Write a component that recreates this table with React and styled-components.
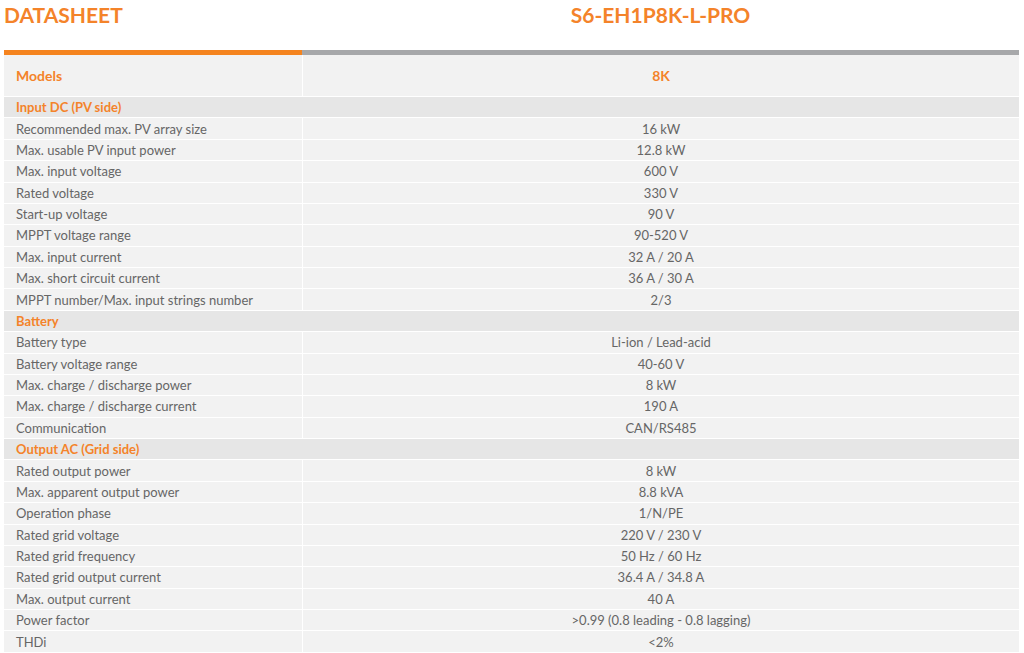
import styled, { createGlobalStyle } from "styled-components";

const GlobalStyle = createGlobalStyle`
  body {
    margin: 0;
    background: #ffffff;
    font-family: Lato, "Open Sans", sans-serif;
  }
`;

const ORANGE = "#f4832a";

const specs = [
  { section: "Input DC (PV side)" },
  ["Recommended max. PV array size", "16 kW"],
  ["Max. usable PV input power", "12.8 kW"],
  ["Max. input voltage", "600 V"],
  ["Rated voltage", "330 V"],
  ["Start-up voltage", "90 V"],
  ["MPPT voltage range", "90-520 V"],
  ["Max. input current", "32 A / 20 A"],
  ["Max. short circuit current", "36 A / 30 A"],
  ["MPPT number/Max. input strings number", "2/3"],
  { section: "Battery" },
  ["Battery type", "Li-ion / Lead-acid"],
  ["Battery voltage range", "40-60 V"],
  ["Max. charge / discharge power", "8 kW"],
  ["Max. charge / discharge current", "190 A"],
  ["Communication", "CAN/RS485"],
  { section: "Output AC (Grid side)" },
  ["Rated output power", "8 kW"],
  ["Max. apparent output power", "8.8 kVA"],
  ["Operation phase", "1/N/PE"],
  ["Rated grid voltage", "220 V / 230 V"],
  ["Rated grid frequency", "50 Hz / 60 Hz"],
  ["Rated grid output current", "36.4 A / 34.8 A"],
  ["Max. output current", "40 A"],
  ["Power factor", ">0.99 (0.8 leading - 0.8 lagging)"],
  ["THDi", "<2%"],
];

const Page = styled.div`
  padding: 0 5px 0 4px;
`;

const Header = styled.div`
  display: grid;
  grid-template-columns: 298px 1fr;
  height: 50px;
  align-items: start;
  padding-top: 1px;
  box-sizing: border-box;
`;

const Title = styled.h1`
  margin: 0;
  font-family: Lato, "Open Sans", sans-serif;
  font-weight: 700;
  font-size: 21px;
  line-height: 28px;
  color: ${ORANGE};
  text-align: ${(p) => (p.$center ? "center" : "left")};
`;

const Bar = styled.div`
  display: grid;
  grid-template-columns: 298px 1fr;
  height: 5px;
  & > div:first-child { background: #f5841f; }
  & > div:last-child { background: #a7a8aa; }
`;

const Row = styled.div`
  display: grid;
  grid-template-columns: ${(p) => (p.$section ? "1fr" : "298px 1fr")};
  column-gap: 1px;
  height: ${(p) => p.$height || "21.375px"};
  border-bottom: 1px solid #ffffff;
  box-sizing: border-box;
  background: #ffffff;
`;

const Cell = styled.div`
  display: flex;
  align-items: center;
  justify-content: ${(p) => (p.$center ? "center" : "flex-start")};
  padding-left: ${(p) => (p.$center ? "0" : "12px")};
  background: ${(p) => (p.$section ? "#e6e6e6" : "#f2f2f2")};
  color: ${(p) => (p.$accent ? ORANGE : "#666666")};
  font-size: ${(p) => (p.$big ? "14px" : "13px")};
  font-weight: ${(p) => (p.$accent ? 700 : 400)};
  white-space: nowrap;
`;

export default function App() {
  return (
    <Page>
      <GlobalStyle />
      <Header>
        <Title>DATASHEET</Title>
        <Title $center>S6-EH1P8K-L-PRO</Title>
      </Header>
      <Bar>
        <div />
        <div />
      </Bar>
      <Row $height="42px">
        <Cell $accent $big>Models</Cell>
        <Cell $accent $big $center>8K</Cell>
      </Row>
      {specs.map((item, i) =>
        item.section ? (
          <Row key={i} $section>
            <Cell $section $accent>{item.section}</Cell>
          </Row>
        ) : (
          <Row key={i}>
            <Cell>{item[0]}</Cell>
            <Cell $center>{item[1]}</Cell>
          </Row>
        )
      )}
    </Page>
  );
}
